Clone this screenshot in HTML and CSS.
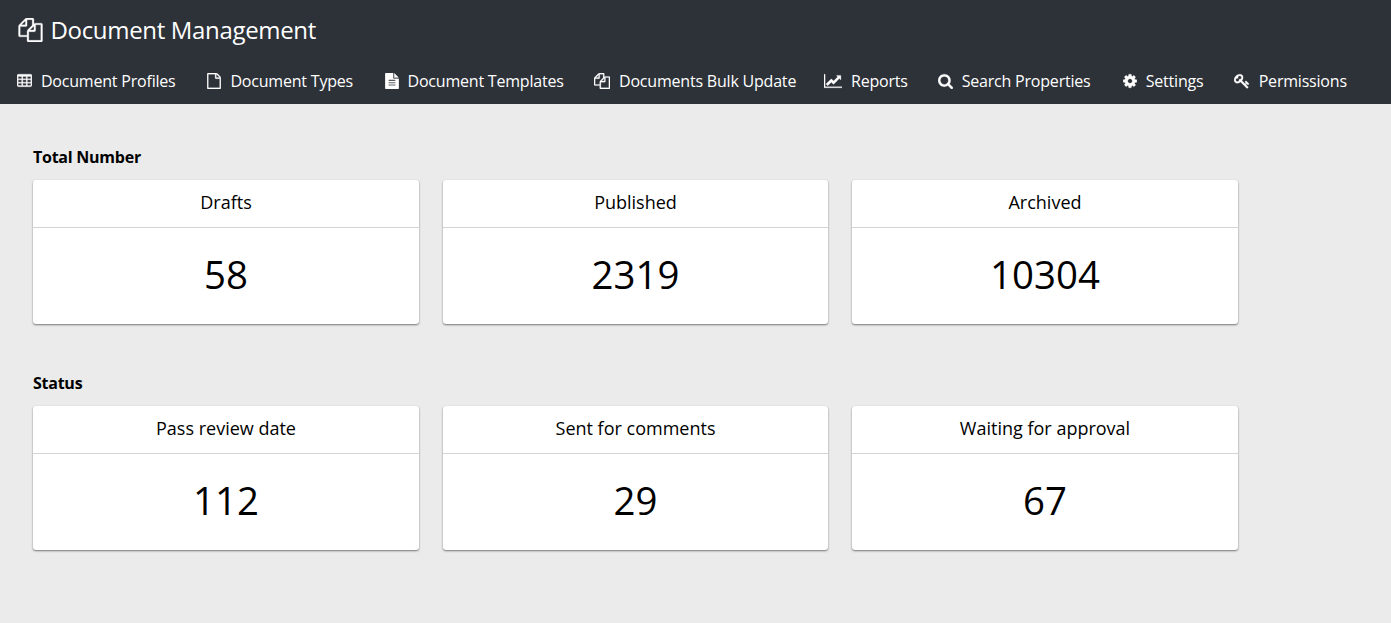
FILE: index.html
```html
<!DOCTYPE html>
<html lang="en">
<head>
<meta charset="utf-8">
<title>Document Management</title>
<link rel="stylesheet" href="styles.css">
</head>
<body>
<svg class="sprite" aria-hidden="true">
  <symbol id="files" viewBox="0 0 1792 1792"><path d="M1696 384q40 0 68 28t28 68v1216q0 40-28 68t-68 28h-960q-40 0-68-28t-28-68v-288h-544q-40 0-68-28t-28-68v-672q0-40 20-88t48-76l408-408q28-28 76-48t88-20h416q40 0 68 28t28 68v328q68-40 128-40h416zm-544 213l-299 299h299v-299zm-640-384l-299 299h299v-299zm196 647l316-316v-416h-384v416q0 40-28 68t-68 28h-416v640h512v-256q0-40 20-88t48-76zm956 804v-1152h-384v416q0 40-28 68t-68 28h-416v640h896z"/></symbol>
</svg>
<header class="header">
  <h1 class="title"><svg class="title-icon"><use href="#files"/></svg>Document Management</h1>
  <nav class="nav">
    <a class="item profiles"><svg class="icon" viewBox="64 0 1664 1792"><path fill-rule="evenodd" d="M224 128h1344q66 0 113 47t47 113v1088q0 66-47 113t-113 47h-1344q-66 0-113-47t-47-113v-1088q0-66 47-113t113-47zM192 384v256h384v-256zM704 384v256h384v-256zM1216 384v256h384v-256zM192 768v256h384v-256zM704 768v256h384v-256zM1216 768v256h384v-256zM192 1152v256h384v-256zM704 1152v256h384v-256zM1216 1152v256h384v-256z"/></svg><span>Document Profiles</span></a>
    <a class="item types"><svg class="icon" viewBox="128 0 1536 1792"><path d="M1596 380q28 28 48 76t20 88v1152q0 40-28 68t-68 28h-1344q-40 0-68-28t-28-68v-1600q0-40 28-68t68-28h896q40 0 88 20t76 48zm-444-244v376h376q-10-29-22-41l-313-313q-12-12-41-22zm384 1528v-1024h-416q-40 0-68-28t-28-68v-416h-768v1536h1280z"/></svg><span>Document Types</span></a>
    <a class="item templates"><svg class="icon" viewBox="128 0 1536 1792"><path d="M1596 476q14 14 28 36h-472v-472q22 14 36 28zm-476 164h544v1056q0 40-28 68t-68 28h-1344q-40 0-68-28t-28-68v-1600q0-40 28-68t68-28h800v544q0 40 28 68t68 28zm160 736v-64q0-14-9-23t-23-9h-704q-14 0-23 9t-9 23v64q0 14 9 23t23 9h704q14 0 23-9t9-23zm0-256v-64q0-14-9-23t-23-9h-704q-14 0-23 9t-9 23v64q0 14 9 23t23 9h704q14 0 23-9t9-23zm0-256v-64q0-14-9-23t-23-9h-704q-14 0-23 9t-9 23v64q0 14 9 23t23 9h704q14 0 23-9t9-23z"/></svg><span>Document Templates</span></a>
    <a class="item bulk"><svg class="icon"><use href="#files"/></svg><span>Documents Bulk Update</span></a>
    <a class="item reports"><svg class="icon" viewBox="0 0 2048 1792"><path d="M2048 1536v128h-2048v-1536h128v1408h1920zm-128-1248v435q0 21-19.5 29.5t-35.5-7.5l-121-121-633 633q-10 10-23 10t-23-10l-233-233-416 416-192-192 585-585q10-10 23-10t23 10l233 233 464-464-121-121q-16-16-7.5-35.5t29.5-19.5h435q14 0 23 9t9 23z"/></svg><span>Reports</span></a>
    <a class="item search"><svg class="icon" viewBox="64 0 1664 1792"><path d="M1216 832q0-185-131.5-316.5t-316.5-131.5-316.5 131.5-131.5 316.5 131.5 316.5 316.5 131.5 316.5-131.5 131.5-316.5zm512 832q0 52-38 90t-90 38q-54 0-90-38l-343-342q-179 124-399 124-143 0-273.5-55.5t-225-150-150-225-55.5-273.5 55.5-273.5 150-225 225-150 273.5-55.5 273.5 55.5 225 150 150 225 55.5 273.5q0 220-124 399l343 343q37 37 37 90z"/></svg><span>Search Properties</span></a>
    <a class="item settings"><svg class="icon" viewBox="128 0 1536 1792"><path d="M1152 896q0-106-75-181t-181-75-181 75-75 181 75 181 181 75 181-75 75-181zm512-109v222q0 12-8 23t-20 13l-185 28q-19 54-39 91 35 50 107 138 10 12 10 25t-9 23q-27 37-99 108t-94 71q-12 0-26-9l-138-108q-44 23-91 38-16 136-29 186-7 28-36 28h-222q-14 0-24.500-8.500t-11.500-21.500l-28-184q-49-16-90-37l-141 107q-10 9-25 9-14 0-25-11-126-114-165-168-7-10-7-23 0-12 8-23 15-21 51-66.500t54-70.500q-27-50-41-99l-183-27q-13-2-21-12.500t-8-23.500v-222q0-12 8-23t19-13l186-28q14-46 39-92-40-57-107-138-10-12-10-24 0-10 9-23 26-36 98.500-107.500t94.500-71.500q13 0 26 10l138 107q44-23 91-38 16-136 29-186 7-28 36-28h222q14 0 24.500 8.500t11.500 21.500l28 184q49 16 90 37l142-107q9-9 24-9 13 0 25 10 129 119 165 170 7 8 7 22 0 12-8 23-15 21-51 66.500t-54 70.500q26 50 41 98l183 28q13 2 21 12.500t8 23.500z"/></svg><span>Settings</span></a>
    <a class="item permissions"><svg class="icon" viewBox="0 0 1792 1792"><path d="M832 512q0-80-56-136t-136-56-136 56-56 136q0 42 19 83-41-19-83-19-80 0-136 56t-56 136 56 136 136 56 136-56 56-136q0-42-19-83 41 19 83 19 80 0 136-56t56-136zm851 704q0 17-49 66t-66 49q-9 0-28.500-16t-36.500-33-38.500-40-24.500-26l-96 96 220 220q28 28 28 68 0 42-39 81t-81 39q-40 0-68-28l-671-671q-176 131-365 131-163 0-265.500-102.500t-102.500-265.500q0-160 95-313t248-248 313-95q163 0 265.500 102.500t102.500 265.500q0 189-131 365l355 355 96-96q-3-3-26-24.500t-40-38.500-33-36.500-16-28.500q0-17 49-66t66-49q13 0 23 10 6 6 46 44.500t82 79.500 86.500 86 73 78 28.500 41z"/></svg><span>Permissions</span></a>
  </nav>
</header>
<main class="main">
  <section class="section">
    <h2 class="heading">Total Number</h2>
    <div class="cards">
      <article class="card"><h3 class="label">Drafts</h3><div class="value">58</div></article>
      <article class="card"><h3 class="label">Published</h3><div class="value">2319</div></article>
      <article class="card"><h3 class="label">Archived</h3><div class="value">10304</div></article>
    </div>
  </section>
  <section class="section">
    <h2 class="heading">Status</h2>
    <div class="cards">
      <article class="card"><h3 class="label">Pass review date</h3><div class="value">112</div></article>
      <article class="card"><h3 class="label">Sent for comments</h3><div class="value">29</div></article>
      <article class="card"><h3 class="label">Waiting for approval</h3><div class="value">67</div></article>
    </div>
  </section>
</main>
</body>
</html>
```

FILE: styles.css
```css
* { box-sizing: border-box; }
body {
  margin: 0;
  min-height: 623px;
  background: #ebebeb;
  color: #000;
  font-family: "Open Sans", sans-serif;
}
.sprite { display: none; }
.header {
  height: 104px;
  padding-left: 17px;
  background: #2d3138;
  color: #fff;
}
.title {
  display: flex;
  align-items: center;
  gap: 8px;
  height: 60px;
  margin: 0;
  padding: 0 0 1px 0.5px;
  font-size: 24px;
  font-weight: 400;
  letter-spacing: -0.33px;
}
.title-icon {
  width: 25px;
  height: 24px;
  margin-top: 1px;
  fill: currentColor;
  stroke: currentColor;
  stroke-width: 20px;
}
.nav { display: flex; height: 42px; padding-left: 0.4px; }
.item {
  display: flex;
  align-items: center;
  gap: 8.500px;
  flex: none;
  font-size: 16px;
  letter-spacing: -0.2px;
  white-space: nowrap;
}
.icon {
  height: 16px;
  flex: none;
  fill: currentColor;
  stroke: currentColor;
  stroke-width: 30px;
}
.profiles { width: 190px; }
.types { width: 177.600px; }
.templates { width: 209.500px; }
.bulk { width: 230px; }
.reports { width: 113.700px; }
.search { width: 184.500px; }
.settings { width: 111.500px; }
.profiles .icon, .search .icon { width: 15px; }
.types .icon, .templates .icon, .settings .icon { width: 14px; }
.types, .settings { gap: 9px; }
.bulk .icon, .permissions .icon { width: 16px; }
.reports .icon { width: 18px; }
.main { padding: 42px 33px 0; }
.section { height: 226px; }
.heading {
  margin: 0 0 12px;
  font-size: 16px;
  line-height: 22px;
  font-weight: 700;
  letter-spacing: -0.25px;
}
.cards { display: grid; grid-template-columns: 386px 385px 386px; gap: 24px; }
.card {
  height: 144px;
  background: #fff;
  border-radius: 3px;
  box-shadow: 0 1px 2px rgba(0, 0, 0, .5);
  text-align: center;
}
.label {
  height: 48px;
  margin: 0;
  border-bottom: 1px solid #d4d4d4;
  font-size: 18px;
  line-height: 45px;
  font-weight: 400;
}
.value { font-size: 38.400px; line-height: 93px; }
```
